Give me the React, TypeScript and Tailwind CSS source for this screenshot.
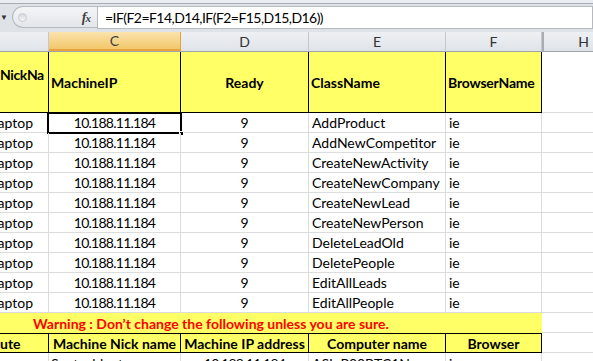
import React from 'react'

const classNames = [
  'AddProduct',
  'AddNewCompetitor',
  'CreateNewActivity',
  'CreateNewCompany',
  'CreateNewLead',
  'CreateNewPerson',
  'DeleteLeadOld',
  'DeletePeople',
  'EditAllLeads',
  'EditAllPeople',
]

function ColHeader({ label, w, active }: { label: string; w: string; active?: boolean }) {
  return (
    <div
      className={`${w} h-full flex items-center justify-center border-r text-[14px] ${
        active
          ? 'bg-gradient-to-b from-[#fbe3ad] to-[#f2c767] border-[#e5a23b] border-b-2 border-b-[#e9a33d] text-[#3e3e3e]'
          : 'bg-gradient-to-b from-[#eef0f3] to-[#dfe3e8] border-[#c4c8ce] text-[#333]'
      }`}
    >
      {label}
    </div>
  )
}

export default function App() {
  return (
    <div className="w-[593px] h-[361px] overflow-hidden bg-white font-['Lato',sans-serif] text-black">
      {/* ribbon edge */}
      <div className="h-[4px] bg-[#e9ecf0] border-b border-[#a9adb3]" />

      {/* formula bar */}
      <div className="h-[26px] bg-[#dfe3e8] flex items-start pt-[2px]">
        <div className="w-[12px] h-[22px] flex items-center">
          <span className="text-[8px] text-[#333] leading-none">▼</span>
        </div>
        <div className="w-[85px] h-[22px] rounded-l-[11px] border border-r-0 border-[#b5bac1] bg-gradient-to-b from-[#f4f5f7] to-[#e3e6ea] flex items-center justify-between pl-[5px] pr-[7px]">
          <div className="w-[9px] h-[9px] rounded-full bg-gradient-to-b from-[#d5d9de] to-[#f3f4f6] border border-[#c7cbd0]" />
          <span className="font-['Liberation_Serif',serif] italic font-bold text-[14px] text-[#444] tracking-[-1px]">
            f<span className="text-[11px]">x</span>
          </span>
        </div>
        <div className="flex-1 h-[23px] bg-white border border-[#b5bac1] flex items-center pl-[7px] text-[14px] tracking-[-0.55px]">
          =IF(F2=F14,D14,IF(F2=F15,D15,D16))
        </div>
      </div>

      <div className="h-[2px] bg-[#dfe3e8]" />

      {/* column headers */}
      <div className="h-[20px] flex border-b border-[#9fa5ad] bg-[#dfe3e8]">
        <ColHeader label="" w="w-[49px]" />
        <ColHeader label="C" w="w-[132px]" active />
        <ColHeader label="D" w="w-[128px]" />
        <ColHeader label="E" w="w-[137px]" />
        <ColHeader label="F" w="w-[96px]" />
        <div className="w-[2px] h-full bg-[#a8adb4]" />
        <div className="flex-1 h-full bg-gradient-to-b from-[#eef0f3] to-[#dfe3e8] flex items-center justify-end pr-[4px] text-[14px] text-[#333]">
          H
        </div>
      </div>

      {/* header row */}
      <div className="h-[61px] flex text-[14px] font-bold">
        <div className="w-[49px] bg-[#ffff66] border-r border-b border-black flex items-start pt-[12px] overflow-hidden">
          <span className="whitespace-nowrap tracking-[-0.4px]">NickNa</span>
        </div>
        <div className="w-[132px] bg-[#ffff66] border-r border-b border-black flex items-center pl-[2px]">MachineIP</div>
        <div className="w-[128px] bg-[#ffff66] border-r border-b border-black flex items-center justify-center">Ready</div>
        <div className="w-[137px] bg-[#ffff66] border-r border-b border-black flex items-center pl-[2px]">ClassName</div>
        <div className="w-[96px] bg-[#ffff66] border-r border-b border-black flex items-center pl-[2px] tracking-[-0.2px]">BrowserName</div>
        <div className="flex-1 border-b border-[#dadcdd]" />
      </div>

      {/* data rows */}
      {classNames.map((name, i) => (
        <div key={name} className="h-[20px] flex text-[14px] relative">
          <div className="w-[49px] border-r border-b border-[#dadcdd] flex items-center justify-end pr-[15px] overflow-hidden">
            aptop
          </div>
          <div className="w-[132px] border-r border-b border-[#dadcdd] flex items-center justify-center tracking-[-0.75px]">
            10.188.11.184
          </div>
          <div className="w-[128px] border-r border-b border-[#dadcdd] flex items-center justify-center">9</div>
          <div className="w-[137px] border-r border-b border-[#dadcdd] flex items-center pl-[3px]">{name}</div>
          <div className="w-[96px] border-r border-b border-[#dadcdd] flex items-center pl-[3px]">ie</div>
          <div className="flex-1 border-b border-[#dadcdd]" />
          {i === 0 && (
            <div className="absolute left-[47px] top-[-1px] w-[135px] h-[22px] border-2 border-black pointer-events-none">
              <div className="absolute right-[-4px] bottom-[-4px] w-[5px] h-[5px] bg-black border border-white" />
            </div>
          )}
        </div>
      ))}

      {/* warning row */}
      <div className="h-[20px] flex">
        <div className="w-[542px] bg-[#ffff66] flex items-center pl-[33px] text-[14px] font-bold text-[#ff0000]">
          Warning : Don’t change the following unless you are sure.
        </div>
        <div className="flex-1 border-b border-[#dadcdd]" />
      </div>

      {/* lower header row */}
      <div className="h-[20px] flex text-[14px] font-bold">
        <div className="w-[49px] bg-[#ffff66] border-y border-r border-black flex items-center overflow-hidden">ute</div>
        <div className="w-[132px] bg-[#ffff66] border-y border-r border-black flex items-center justify-center">Machine Nick name</div>
        <div className="w-[128px] bg-[#ffff66] border-y border-r border-black flex items-center justify-center whitespace-nowrap overflow-hidden">
          Machine IP address
        </div>
        <div className="w-[137px] bg-[#ffff66] border-y border-r border-black flex items-center justify-center">Computer name</div>
        <div className="w-[96px] bg-[#ffff66] border-y border-r border-black flex items-center justify-center">Browser</div>
        <div className="flex-1 border-b border-[#dadcdd]" />
      </div>

      {/* partial row */}
      <div className="h-[20px] flex text-[14px]">
        <div className="w-[49px] border-r border-[#dadcdd]" />
        <div className="w-[132px] border-r border-[#dadcdd] flex items-center pl-[2px]">Santoshlaptop</div>
        <div className="w-[128px] border-r border-[#dadcdd] flex items-center justify-center tracking-[-0.75px]">
          10.188.11.184
        </div>
        <div className="w-[137px] border-r border-[#dadcdd] flex items-center pl-[3px]">ASL-P00BTC1N</div>
        <div className="w-[96px] border-r border-[#dadcdd] flex items-center pl-[3px]">ie</div>
        <div className="flex-1" />
      </div>
    </div>
  )
}
